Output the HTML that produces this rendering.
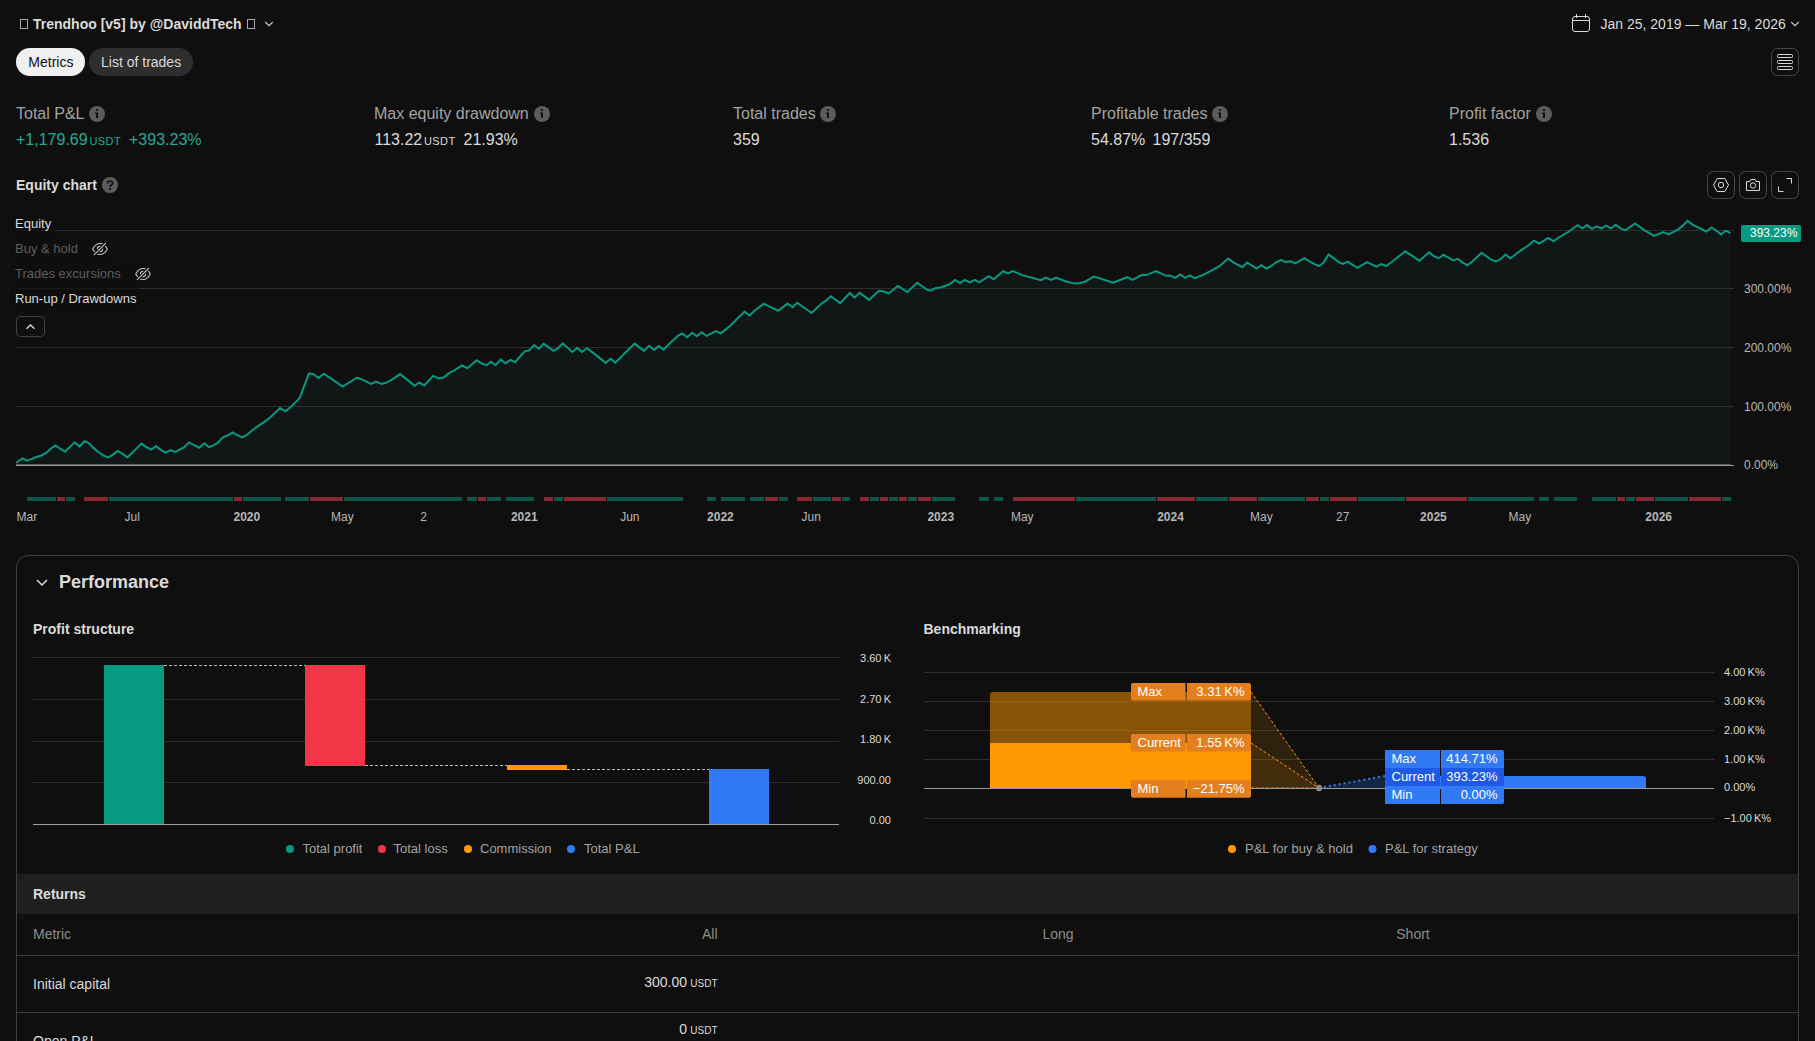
<!DOCTYPE html>
<html><head><meta charset="utf-8"><style>
html,body{margin:0;padding:0;background:#0f0f0f;}
body{width:1815px;height:1041px;overflow:hidden;position:relative;font-family:"Liberation Sans", sans-serif;}
.t{position:absolute;white-space:nowrap;font-family:"Liberation Sans", sans-serif;}
.box{position:absolute;box-sizing:border-box;border:1px solid #a8a8a8;}
.pill{position:absolute;border-radius:14px;}
svg{overflow:visible}
</style></head><body>
<div class="box" style="left:20px;top:19px;width:8px;height:10px;"></div><div class="t" style="left:33px;top:17px;font-size:14px;line-height:14px;color:#dbdbdb;font-weight:700;">Trendhoo [v5] by @DaviddTech</div>
<div class="box" style="left:247px;top:19px;width:8px;height:10px;"></div><svg style="position:absolute;left:264px;top:20px" width="10" height="8" viewBox="0 0 10 8"><path d="M1.2 2 L5 5.6 L8.8 2" fill="none" stroke="#c8c8c8" stroke-width="1.2"/></svg><svg style="position:absolute;left:1571px;top:13px" width="20" height="20" viewBox="0 0 20 20">
<rect x="1.5" y="3.5" width="17" height="15" rx="2.5" fill="none" stroke="#dbdbdb" stroke-width="1"/>
<line x1="1.5" y1="7.5" x2="18.5" y2="7.5" stroke="#dbdbdb" stroke-width="1"/>
<line x1="5.5" y1="1" x2="5.5" y2="5" stroke="#dbdbdb" stroke-width="1"/>
<line x1="14.5" y1="1" x2="14.5" y2="5" stroke="#dbdbdb" stroke-width="1"/>
</svg><div class="t" style="left:1600.5px;top:17px;font-size:14px;line-height:14px;color:#dbdbdb;font-weight:400;">Jan 25, 2019 — Mar 19, 2026</div>
<svg style="position:absolute;left:1790px;top:20px" width="10" height="8" viewBox="0 0 10 8"><path d="M1.2 2 L5 5.6 L8.8 2" fill="none" stroke="#c8c8c8" stroke-width="1.2"/></svg><div class="pill" style="left:16px;top:48px;width:69px;height:28px;background:#f0f0f0;"></div><div class="t" style="left:28.3px;top:55px;font-size:14px;line-height:14px;color:#0f0f0f;font-weight:400;">Metrics</div>
<div class="pill" style="left:89px;top:48px;width:104px;height:28px;background:#2e2e2e;"></div><div class="t" style="left:101px;top:55px;font-size:14px;line-height:14px;color:#dbdbdb;font-weight:400;">List of trades</div>
<svg style="position:absolute;left:1771px;top:48px" width="28" height="28" viewBox="0 0 28 28">
<rect x="0.5" y="0.5" width="27" height="27" rx="6" fill="none" stroke="#474747"/>
<rect x="6.5" y="6.5" width="15" height="3" rx="1" fill="none" stroke="#dbdbdb"/>
<rect x="6.5" y="12.5" width="15" height="3" rx="1" fill="none" stroke="#dbdbdb"/>
<rect x="6.5" y="18.5" width="15" height="3" rx="1" fill="none" stroke="#dbdbdb"/>
</svg><div class="t" style="left:16px;top:106px;font-size:16px;line-height:16px;color:#a3a3a3;font-weight:400;">Total P&amp;L</div>
<div class="t" style="left:374px;top:106px;font-size:16px;line-height:16px;color:#a3a3a3;font-weight:400;">Max equity drawdown</div>
<div class="t" style="left:733px;top:106px;font-size:16px;line-height:16px;color:#a3a3a3;font-weight:400;">Total trades</div>
<div class="t" style="left:1091px;top:106px;font-size:16px;line-height:16px;color:#a3a3a3;font-weight:400;">Profitable trades</div>
<div class="t" style="left:1449px;top:106px;font-size:16px;line-height:16px;color:#a3a3a3;font-weight:400;">Profit factor</div>
<svg style="position:absolute;left:89px;top:106px" width="16" height="16" viewBox="0 0 16 16"><circle cx="8" cy="8" r="8" fill="#5c5c5c"/><rect x="7" y="3.2" width="2" height="1.8" fill="#0f0f0f"/><path d="M6 6.4 H9 V12 H7 V7.8 H6 Z" fill="#0f0f0f"/></svg><svg style="position:absolute;left:534px;top:106px" width="16" height="16" viewBox="0 0 16 16"><circle cx="8" cy="8" r="8" fill="#5c5c5c"/><rect x="7" y="3.2" width="2" height="1.8" fill="#0f0f0f"/><path d="M6 6.4 H9 V12 H7 V7.8 H6 Z" fill="#0f0f0f"/></svg><svg style="position:absolute;left:820px;top:106px" width="16" height="16" viewBox="0 0 16 16"><circle cx="8" cy="8" r="8" fill="#5c5c5c"/><rect x="7" y="3.2" width="2" height="1.8" fill="#0f0f0f"/><path d="M6 6.4 H9 V12 H7 V7.8 H6 Z" fill="#0f0f0f"/></svg><svg style="position:absolute;left:1212px;top:106px" width="16" height="16" viewBox="0 0 16 16"><circle cx="8" cy="8" r="8" fill="#5c5c5c"/><rect x="7" y="3.2" width="2" height="1.8" fill="#0f0f0f"/><path d="M6 6.4 H9 V12 H7 V7.8 H6 Z" fill="#0f0f0f"/></svg><svg style="position:absolute;left:1536px;top:106px" width="16" height="16" viewBox="0 0 16 16"><circle cx="8" cy="8" r="8" fill="#5c5c5c"/><rect x="7" y="3.2" width="2" height="1.8" fill="#0f0f0f"/><path d="M6 6.4 H9 V12 H7 V7.8 H6 Z" fill="#0f0f0f"/></svg><div class="t" style="left:16px;top:132px;font-size:16px;line-height:16px;color:#22ab94;font-weight:400;">+1,179.69</div>
<div class="t" style="left:89.5px;top:136px;font-size:11px;line-height:11px;color:#22ab94;font-weight:400;letter-spacing:0.4px">USDT</div>
<div class="t" style="left:129px;top:132px;font-size:16px;line-height:16px;color:#22ab94;font-weight:400;">+393.23%</div>
<div class="t" style="left:374.5px;top:132px;font-size:16px;line-height:16px;color:#dbdbdb;font-weight:400;">113.22</div>
<div class="t" style="left:424px;top:136px;font-size:11px;line-height:11px;color:#dbdbdb;font-weight:400;letter-spacing:0.4px">USDT</div>
<div class="t" style="left:463.5px;top:132px;font-size:16px;line-height:16px;color:#dbdbdb;font-weight:400;">21.93%</div>
<div class="t" style="left:733px;top:132px;font-size:16px;line-height:16px;color:#dbdbdb;font-weight:400;">359</div>
<div class="t" style="left:1091px;top:132px;font-size:16px;line-height:16px;color:#dbdbdb;font-weight:400;">54.87%</div>
<div class="t" style="left:1152.5px;top:132px;font-size:16px;line-height:16px;color:#dbdbdb;font-weight:400;">197/359</div>
<div class="t" style="left:1449px;top:132px;font-size:16px;line-height:16px;color:#dbdbdb;font-weight:400;">1.536</div>
<div class="t" style="left:16px;top:178px;font-size:14px;line-height:14px;color:#dbdbdb;font-weight:700;">Equity chart</div>
<svg style="position:absolute;left:102px;top:177px" width="16" height="16" viewBox="0 0 16 16">
<circle cx="8" cy="8" r="8" fill="#5c5c5c"/>
<path d="M5.4 6.4 C5.4 4.9 6.5 4 8 4 C9.5 4 10.6 4.9 10.6 6.2 C10.6 7.8 8 8.1 8 9.9" fill="none" stroke="#0f0f0f" stroke-width="1.7"/>
<rect x="7.05" y="11.1" width="1.9" height="1.9" fill="#0f0f0f"/>
</svg><svg style="position:absolute;left:1707px;top:171px" width="28" height="28" viewBox="0 0 28 28"><rect x="0.5" y="0.5" width="27" height="27" rx="6" fill="none" stroke="#474747"/><path d="M10.2 7.5 H17.8 L21.5 14 L17.8 20.5 H10.2 L6.5 14 Z" fill="none" stroke="#dbdbdb"/><circle cx="14" cy="14" r="2.7" fill="none" stroke="#dbdbdb"/></svg><svg style="position:absolute;left:1739px;top:171px" width="28" height="28" viewBox="0 0 28 28"><rect x="0.5" y="0.5" width="27" height="27" rx="6" fill="none" stroke="#474747"/><path d="M7.5 10.5 H11 L12 8.5 H16 L17 10.5 H20.5 V19.5 H7.5 Z" fill="none" stroke="#dbdbdb" stroke-linejoin="round"/><circle cx="14" cy="14.5" r="2.7" fill="none" stroke="#dbdbdb"/></svg><svg style="position:absolute;left:1771px;top:171px" width="28" height="28" viewBox="0 0 28 28"><rect x="0.5" y="0.5" width="27" height="27" rx="6" fill="none" stroke="#474747"/><path d="M15.5 7.5 H20.5 V12.5" fill="none" stroke="#dbdbdb"/><path d="M7.5 15.5 V20.5 H12.5" fill="none" stroke="#dbdbdb"/></svg><svg style="position:absolute;left:0;top:0" width="1815" height="1041" viewBox="0 0 1815 1041" font-family="&quot;Liberation Sans&quot;, sans-serif">
<polygon points="16,465 16.5,463 17.6,461.7 22.4,458.5 27.2,460.6 32,458.9 36.9,456.8 41,455.7 46.5,452.6 51.3,448.2 55.5,445.4 60.3,448.8 65.1,451.6 69.9,447.1 74.7,442.4 79.6,446.5 84.4,441.3 89.2,443.3 94,448.4 98.8,452.3 103.7,455.7 108.1,457.4 112.6,454.8 117.7,450.9 122.3,453.7 127.4,457.4 131.9,453 136.7,448.4 141.5,443.6 146.4,447.1 151.2,449.5 156,446.1 160.8,449.8 165.6,452.6 170.5,450.2 175.3,452 180.1,449.3 184.2,447.1 189.1,442.4 194.6,445.4 199.4,447.7 204.2,443.3 209,447.1 213.9,445.1 218,442.6 222.8,437.4 227.6,435.5 232.5,432.3 237.3,435.1 242.1,437.4 246.9,434.8 252.4,430.2 256.9,426.9 265.8,420.9 272,415.8 280,407.9 285.5,411.3 291.3,406.5 299.6,398.2 309,373.4 313.4,374.1 318.6,378 323.7,373.7 332.6,379.6 342.6,386.5 357.2,377.5 362.3,379.6 371.2,384 376,381.7 381.5,384 385.7,382.8 391.9,379.6 400.1,374.1 407,379.6 414.6,385.8 419.1,382.4 424.2,385.4 433.2,375.9 438.7,378.3 443.5,377.5 449,373.1 453.9,370.7 462.1,365.4 467.4,368.2 476.6,360.3 482.1,363.5 486.6,365.2 491,361.7 495.5,365.1 500.7,359.6 505.4,363.3 510.4,359.9 515.1,362.2 524.4,351.6 529.3,350.2 534.1,345 538.9,348.9 543.7,343.6 553.4,350.9 557.5,348.6 562.7,343.4 572.4,351.9 577.1,347.9 582,351.9 587.1,348.2 596.1,355.1 605.7,362.9 610.5,358.8 615.3,362.6 634.6,343.6 644,350.9 649.1,345.8 653.9,350 658.7,346.1 663.6,349.6 669.1,344 678,335.8 682.1,333.4 687.2,337.2 692.2,332.8 696.9,336.2 701.4,332.3 706.5,335.8 715.9,331 720.7,333.4 725.5,329.6 730.4,325.5 744.5,311.6 749.6,315.5 754.8,310.5 763.7,303.6 778.2,310.9 787.6,303.6 792.7,307.2 797.2,302.7 811.5,313 821.6,303.6 826.4,300.3 830.8,296.2 840.2,303.1 849.8,293 854.7,297.6 859.5,292.6 869.1,299.9 878.8,290.7 883.2,291.2 888.7,293.4 897.8,285.9 907.4,292.1 917.1,282.7 927,289.6 931.1,290.7 935.9,287.9 940.7,287.5 949.7,284.1 955.2,280 960,283 964.8,280 969.7,282.4 974.8,279.9 979.4,282.3 988.6,276.2 993.7,279.2 1003.1,271.2 1007.9,273.4 1012.7,271 1022.3,275.1 1040.9,280.2 1045.8,277.6 1051.3,279.9 1056.1,277.6 1066,281.5 1074.7,283.6 1080,283 1085,281.7 1094,276.5 1113.3,282.7 1127,277.2 1132.5,279.9 1141.9,274.8 1146.3,275.1 1156,271 1160.8,273.4 1166.3,275.8 1170.4,275.8 1175.2,277.9 1180.1,274.4 1185.2,277.9 1189.7,275.4 1194.8,278.1 1204.2,274.4 1210,271.3 1219,266.5 1228.2,258.5 1233.4,262.3 1242.4,267.2 1247.2,262.6 1256.6,268.5 1261.4,265.1 1266.5,268.5 1270.6,266.5 1276.1,262.3 1280.9,259.9 1285.8,262.1 1290.6,261.2 1295.4,263.4 1304.4,258.2 1310.6,262.1 1318.8,266.2 1323.6,262.6 1328.5,254.4 1338.8,262.1 1342.9,264 1347.7,261.7 1357.4,267.9 1367,262.1 1376.4,266.7 1381.5,264 1386.3,266.2 1405.3,251.3 1419.4,260.7 1429,252.4 1433.8,256.1 1438.7,258.2 1443.5,254.8 1453.2,260.4 1457.7,258.8 1462.8,262.6 1467.3,265.2 1472.4,261.5 1481.6,252.7 1490.7,259.4 1496,261.5 1500.8,258.8 1505.6,254.6 1510.4,258.3 1520.3,250.8 1528.3,245.5 1533.9,240.7 1539.2,243.5 1548.3,238 1553.5,241.2 1558.6,237.5 1568.2,232 1577.5,225.2 1582.3,228.4 1587.1,225.1 1591.9,228.8 1596.7,226.4 1601.5,228.4 1606.3,225.6 1611,228.4 1615.8,224.8 1620.6,228.4 1625.4,230.4 1635,223.5 1644.6,230.4 1654.2,235.9 1663.3,232 1668.6,234.4 1677.7,229.6 1682.5,225.9 1687.6,220.8 1692.9,224.8 1701.6,229.1 1706.4,231.5 1711.5,227.5 1716.5,230.7 1721.1,234.4 1725.6,230.7 1730.4,233.2 1731,233 1731,465" fill="#111716"/>
<line x1="16" y1="230.5" x2="1734" y2="230.5" stroke="#2e2e2e" stroke-width="1"/>
<line x1="16" y1="288.5" x2="1734" y2="288.5" stroke="#2e2e2e" stroke-width="1"/>
<line x1="16" y1="347.5" x2="1734" y2="347.5" stroke="#2e2e2e" stroke-width="1"/>
<line x1="16" y1="406.5" x2="1734" y2="406.5" stroke="#2e2e2e" stroke-width="1"/>
<polyline points="16.5,463 17.6,461.7 22.4,458.5 27.2,460.6 32,458.9 36.9,456.8 41,455.7 46.5,452.6 51.3,448.2 55.5,445.4 60.3,448.8 65.1,451.6 69.9,447.1 74.7,442.4 79.6,446.5 84.4,441.3 89.2,443.3 94,448.4 98.8,452.3 103.7,455.7 108.1,457.4 112.6,454.8 117.7,450.9 122.3,453.7 127.4,457.4 131.9,453 136.7,448.4 141.5,443.6 146.4,447.1 151.2,449.5 156,446.1 160.8,449.8 165.6,452.6 170.5,450.2 175.3,452 180.1,449.3 184.2,447.1 189.1,442.4 194.6,445.4 199.4,447.7 204.2,443.3 209,447.1 213.9,445.1 218,442.6 222.8,437.4 227.6,435.5 232.5,432.3 237.3,435.1 242.1,437.4 246.9,434.8 252.4,430.2 256.9,426.9 265.8,420.9 272,415.8 280,407.9 285.5,411.3 291.3,406.5 299.6,398.2 309,373.4 313.4,374.1 318.6,378 323.7,373.7 332.6,379.6 342.6,386.5 357.2,377.5 362.3,379.6 371.2,384 376,381.7 381.5,384 385.7,382.8 391.9,379.6 400.1,374.1 407,379.6 414.6,385.8 419.1,382.4 424.2,385.4 433.2,375.9 438.7,378.3 443.5,377.5 449,373.1 453.9,370.7 462.1,365.4 467.4,368.2 476.6,360.3 482.1,363.5 486.6,365.2 491,361.7 495.5,365.1 500.7,359.6 505.4,363.3 510.4,359.9 515.1,362.2 524.4,351.6 529.3,350.2 534.1,345 538.9,348.9 543.7,343.6 553.4,350.9 557.5,348.6 562.7,343.4 572.4,351.9 577.1,347.9 582,351.9 587.1,348.2 596.1,355.1 605.7,362.9 610.5,358.8 615.3,362.6 634.6,343.6 644,350.9 649.1,345.8 653.9,350 658.7,346.1 663.6,349.6 669.1,344 678,335.8 682.1,333.4 687.2,337.2 692.2,332.8 696.9,336.2 701.4,332.3 706.5,335.8 715.9,331 720.7,333.4 725.5,329.6 730.4,325.5 744.5,311.6 749.6,315.5 754.8,310.5 763.7,303.6 778.2,310.9 787.6,303.6 792.7,307.2 797.2,302.7 811.5,313 821.6,303.6 826.4,300.3 830.8,296.2 840.2,303.1 849.8,293 854.7,297.6 859.5,292.6 869.1,299.9 878.8,290.7 883.2,291.2 888.7,293.4 897.8,285.9 907.4,292.1 917.1,282.7 927,289.6 931.1,290.7 935.9,287.9 940.7,287.5 949.7,284.1 955.2,280 960,283 964.8,280 969.7,282.4 974.8,279.9 979.4,282.3 988.6,276.2 993.7,279.2 1003.1,271.2 1007.9,273.4 1012.7,271 1022.3,275.1 1040.9,280.2 1045.8,277.6 1051.3,279.9 1056.1,277.6 1066,281.5 1074.7,283.6 1080,283 1085,281.7 1094,276.5 1113.3,282.7 1127,277.2 1132.5,279.9 1141.9,274.8 1146.3,275.1 1156,271 1160.8,273.4 1166.3,275.8 1170.4,275.8 1175.2,277.9 1180.1,274.4 1185.2,277.9 1189.7,275.4 1194.8,278.1 1204.2,274.4 1210,271.3 1219,266.5 1228.2,258.5 1233.4,262.3 1242.4,267.2 1247.2,262.6 1256.6,268.5 1261.4,265.1 1266.5,268.5 1270.6,266.5 1276.1,262.3 1280.9,259.9 1285.8,262.1 1290.6,261.2 1295.4,263.4 1304.4,258.2 1310.6,262.1 1318.8,266.2 1323.6,262.6 1328.5,254.4 1338.8,262.1 1342.9,264 1347.7,261.7 1357.4,267.9 1367,262.1 1376.4,266.7 1381.5,264 1386.3,266.2 1405.3,251.3 1419.4,260.7 1429,252.4 1433.8,256.1 1438.7,258.2 1443.5,254.8 1453.2,260.4 1457.7,258.8 1462.8,262.6 1467.3,265.2 1472.4,261.5 1481.6,252.7 1490.7,259.4 1496,261.5 1500.8,258.8 1505.6,254.6 1510.4,258.3 1520.3,250.8 1528.3,245.5 1533.9,240.7 1539.2,243.5 1548.3,238 1553.5,241.2 1558.6,237.5 1568.2,232 1577.5,225.2 1582.3,228.4 1587.1,225.1 1591.9,228.8 1596.7,226.4 1601.5,228.4 1606.3,225.6 1611,228.4 1615.8,224.8 1620.6,228.4 1625.4,230.4 1635,223.5 1644.6,230.4 1654.2,235.9 1663.3,232 1668.6,234.4 1677.7,229.6 1682.5,225.9 1687.6,220.8 1692.9,224.8 1701.6,229.1 1706.4,231.5 1711.5,227.5 1716.5,230.7 1721.1,234.4 1725.6,230.7 1730.4,233.2" fill="none" stroke="#089981" stroke-width="2" stroke-linejoin="miter"/>
<line x1="16" y1="465.5" x2="1734" y2="465.5" stroke="#999999" stroke-width="1"/>
<line x1="16" y1="464.5" x2="1731" y2="464.5" stroke="#5a5a5a" stroke-width="1"/>
<rect x="27" y="497" width="29" height="4" fill="#0d5549"/>
<rect x="57" y="497" width="8" height="4" fill="#862830"/>
<rect x="66" y="497" width="9" height="4" fill="#0d5549"/>
<rect x="84" y="497" width="24" height="4" fill="#862830"/>
<rect x="109" y="497" width="124" height="4" fill="#0d5549"/>
<rect x="234" y="497" width="8" height="4" fill="#862830"/>
<rect x="243" y="497" width="38" height="4" fill="#0d5549"/>
<rect x="285" y="497" width="24" height="4" fill="#0d5549"/>
<rect x="310" y="497" width="33" height="4" fill="#862830"/>
<rect x="344" y="497" width="118" height="4" fill="#0d5549"/>
<rect x="467" y="497" width="10" height="4" fill="#0d5549"/>
<rect x="478" y="497" width="8" height="4" fill="#862830"/>
<rect x="487" y="497" width="14" height="4" fill="#0d5549"/>
<rect x="506" y="497" width="28" height="4" fill="#0d5549"/>
<rect x="544" y="497" width="9" height="4" fill="#862830"/>
<rect x="554" y="497" width="9" height="4" fill="#0d5549"/>
<rect x="564" y="497" width="42" height="4" fill="#862830"/>
<rect x="607" y="497" width="76" height="4" fill="#0d5549"/>
<rect x="707" y="497" width="9" height="4" fill="#0d5549"/>
<rect x="721" y="497" width="24" height="4" fill="#0d5549"/>
<rect x="750" y="497" width="14" height="4" fill="#0d5549"/>
<rect x="765" y="497" width="13" height="4" fill="#862830"/>
<rect x="779" y="497" width="9" height="4" fill="#0d5549"/>
<rect x="797" y="497" width="15" height="4" fill="#862830"/>
<rect x="813" y="497" width="18" height="4" fill="#0d5549"/>
<rect x="832" y="497" width="9" height="4" fill="#862830"/>
<rect x="842" y="497" width="8" height="4" fill="#0d5549"/>
<rect x="860" y="497" width="9" height="4" fill="#862830"/>
<rect x="870" y="497" width="9" height="4" fill="#0d5549"/>
<rect x="880" y="497" width="8" height="4" fill="#862830"/>
<rect x="889" y="497" width="9" height="4" fill="#0d5549"/>
<rect x="899" y="497" width="8" height="4" fill="#862830"/>
<rect x="908" y="497" width="9" height="4" fill="#0d5549"/>
<rect x="918" y="497" width="13" height="4" fill="#862830"/>
<rect x="932" y="497" width="23" height="4" fill="#0d5549"/>
<rect x="979" y="497" width="10" height="4" fill="#0d5549"/>
<rect x="994" y="497" width="9" height="4" fill="#0d5549"/>
<rect x="1013" y="497" width="62" height="4" fill="#862830"/>
<rect x="1076" y="497" width="80" height="4" fill="#0d5549"/>
<rect x="1157" y="497" width="38" height="4" fill="#862830"/>
<rect x="1196" y="497" width="32" height="4" fill="#0d5549"/>
<rect x="1229" y="497" width="28" height="4" fill="#862830"/>
<rect x="1258" y="497" width="47" height="4" fill="#0d5549"/>
<rect x="1306" y="497" width="13" height="4" fill="#862830"/>
<rect x="1320" y="497" width="9" height="4" fill="#0d5549"/>
<rect x="1330" y="497" width="27" height="4" fill="#862830"/>
<rect x="1358" y="497" width="47" height="4" fill="#0d5549"/>
<rect x="1406" y="497" width="61" height="4" fill="#862830"/>
<rect x="1468" y="497" width="66" height="4" fill="#0d5549"/>
<rect x="1539" y="497" width="10" height="4" fill="#0d5549"/>
<rect x="1554" y="497" width="23" height="4" fill="#0d5549"/>
<rect x="1592" y="497" width="24" height="4" fill="#0d5549"/>
<rect x="1617" y="497" width="8" height="4" fill="#862830"/>
<rect x="1626" y="497" width="9" height="4" fill="#0d5549"/>
<rect x="1636" y="497" width="18" height="4" fill="#862830"/>
<rect x="1655" y="497" width="33" height="4" fill="#0d5549"/>
<rect x="1689" y="497" width="32" height="4" fill="#862830"/>
<rect x="1722" y="497" width="9" height="4" fill="#0d5549"/>
<text x="16.5" y="521" font-size="12" fill="#b8b8b8" font-weight="400" text-anchor="start" >Mar</text>
<text x="124.5" y="521" font-size="12" fill="#b8b8b8" font-weight="400" text-anchor="start" >Jul</text>
<text x="233.5" y="521" font-size="12" fill="#b8b8b8" font-weight="700" text-anchor="start" >2020</text>
<text x="331.1" y="521" font-size="12" fill="#b8b8b8" font-weight="400" text-anchor="start" >May</text>
<text x="420.3" y="521" font-size="12" fill="#b8b8b8" font-weight="400" text-anchor="start" >2</text>
<text x="510.9" y="521" font-size="12" fill="#b8b8b8" font-weight="700" text-anchor="start" >2021</text>
<text x="620.2" y="521" font-size="12" fill="#b8b8b8" font-weight="400" text-anchor="start" >Jun</text>
<text x="707.1" y="521" font-size="12" fill="#b8b8b8" font-weight="700" text-anchor="start" >2022</text>
<text x="801.6" y="521" font-size="12" fill="#b8b8b8" font-weight="400" text-anchor="start" >Jun</text>
<text x="927.4" y="521" font-size="12" fill="#b8b8b8" font-weight="700" text-anchor="start" >2023</text>
<text x="1010.9" y="521" font-size="12" fill="#b8b8b8" font-weight="400" text-anchor="start" >May</text>
<text x="1157.2" y="521" font-size="12" fill="#b8b8b8" font-weight="700" text-anchor="start" >2024</text>
<text x="1250.1" y="521" font-size="12" fill="#b8b8b8" font-weight="400" text-anchor="start" >May</text>
<text x="1336.0" y="521" font-size="12" fill="#b8b8b8" font-weight="400" text-anchor="start" >27</text>
<text x="1420.1" y="521" font-size="12" fill="#b8b8b8" font-weight="700" text-anchor="start" >2025</text>
<text x="1508.5" y="521" font-size="12" fill="#b8b8b8" font-weight="400" text-anchor="start" >May</text>
<text x="1645.3" y="521" font-size="12" fill="#b8b8b8" font-weight="700" text-anchor="start" >2026</text>
<text x="1744" y="292.8" font-size="12" fill="#b8b8b8" font-weight="400" text-anchor="start" >300.00%</text>
<text x="1744" y="351.8" font-size="12" fill="#b8b8b8" font-weight="400" text-anchor="start" >200.00%</text>
<text x="1744" y="410.8" font-size="12" fill="#b8b8b8" font-weight="400" text-anchor="start" >100.00%</text>
<text x="1744" y="469.3" font-size="12" fill="#b8b8b8" font-weight="400" text-anchor="start" >0.00%</text>
<rect x="1741" y="225" width="60" height="17" rx="2" fill="#089981"/>
<text x="1750" y="237" font-size="12" fill="#ffffff" font-weight="400" text-anchor="start" >393.23%</text>
</svg>
<div style="position:absolute;left:11px;top:211px;width:44px;height:24px;background:rgba(15,15,15,0.75)"></div>
<div class="t" style="left:15px;top:217.00px;font-size:13px;line-height:13px;color:#dbdbdb">Equity</div>
<div style="position:absolute;left:11px;top:236px;width:102px;height:24px;background:rgba(15,15,15,0.75)"></div>
<div class="t" style="left:15px;top:242.00px;font-size:13px;line-height:13px;color:#5d5d5d">Buy &amp; hold</div>
<div style="position:absolute;left:11px;top:261px;width:143px;height:24px;background:rgba(15,15,15,0.75)"></div>
<div class="t" style="left:15px;top:267.00px;font-size:13px;line-height:13px;color:#5d5d5d">Trades excursions</div>
<div style="position:absolute;left:11px;top:286px;width:128px;height:24px;background:rgba(15,15,15,0.75)"></div>
<div class="t" style="left:15px;top:292.00px;font-size:13px;line-height:13px;color:#dbdbdb">Run-up / Drawdowns</div>
<svg style="position:absolute;left:92px;top:242px" width="16" height="14" viewBox="0 0 16 14"><path d="M0.7 7 C2.6 3.4 5.2 1.5 8 1.5 C10.8 1.5 13.4 3.4 15.3 7 C13.4 10.6 10.8 12.5 8 12.5 C5.2 12.5 2.6 10.6 0.7 7 Z" fill="none" stroke="#c8c8c8" stroke-width="1.1"/><circle cx="8" cy="7" r="2.6" fill="none" stroke="#c8c8c8" stroke-width="1.1"/><line x1="2.3" y1="12.6" x2="13.6" y2="1.3" stroke="#0f0f0f" stroke-width="3.2"/><line x1="2.3" y1="12.6" x2="13.6" y2="1.3" stroke="#c8c8c8" stroke-width="1.1" stroke-linecap="round"/></svg>
<svg style="position:absolute;left:135px;top:267px" width="16" height="14" viewBox="0 0 16 14"><path d="M0.7 7 C2.6 3.4 5.2 1.5 8 1.5 C10.8 1.5 13.4 3.4 15.3 7 C13.4 10.6 10.8 12.5 8 12.5 C5.2 12.5 2.6 10.6 0.7 7 Z" fill="none" stroke="#c8c8c8" stroke-width="1.1"/><circle cx="8" cy="7" r="2.6" fill="none" stroke="#c8c8c8" stroke-width="1.1"/><line x1="2.3" y1="12.6" x2="13.6" y2="1.3" stroke="#0f0f0f" stroke-width="3.2"/><line x1="2.3" y1="12.6" x2="13.6" y2="1.3" stroke="#c8c8c8" stroke-width="1.1" stroke-linecap="round"/></svg>
<svg style="position:absolute;left:16px;top:316px" width="29" height="21" viewBox="0 0 29 21"><rect x="0.5" y="0.5" width="28" height="20" rx="4" fill="none" stroke="#444"/><path d="M10.5 12.8 L14.5 9 L18.5 12.8" fill="none" stroke="#dbdbdb" stroke-width="1.3"/></svg><div style="position:absolute;left:16px;top:555px;width:1783px;height:600px;box-sizing:border-box;border:1px solid #404040;border-radius:12px;"></div>
<div style="position:absolute;left:17px;top:874px;width:1781px;height:40px;background:#1f1f1f"></div>
<svg style="position:absolute;left:0;top:0" width="1815" height="1041" viewBox="0 0 1815 1041" font-family="&quot;Liberation Sans&quot;, sans-serif">
<path d="M37 580 L42 585 L47 580" fill="none" stroke="#dbdbdb" stroke-width="1.5"/>
<text x="59" y="588.2" font-size="18" fill="#dbdbdb" font-weight="700" text-anchor="start" >Performance</text>
<text x="33" y="634.4" font-size="14" fill="#dbdbdb" font-weight="700" text-anchor="start" >Profit structure</text>
<text x="923.5" y="634.4" font-size="14" fill="#dbdbdb" font-weight="700" text-anchor="start" >Benchmarking</text>
<line x1="33" y1="657.5" x2="839" y2="657.5" stroke="#2e2e2e"/>
<text x="891" y="662" font-size="11" fill="#dbdbdb" font-weight="400" text-anchor="end" >3.60&#8201;K</text>
<line x1="33" y1="699.5" x2="839" y2="699.5" stroke="#2e2e2e"/>
<text x="891" y="703" font-size="11" fill="#dbdbdb" font-weight="400" text-anchor="end" >2.70&#8201;K</text>
<line x1="33" y1="741.5" x2="839" y2="741.5" stroke="#2e2e2e"/>
<text x="891" y="743" font-size="11" fill="#dbdbdb" font-weight="400" text-anchor="end" >1.80&#8201;K</text>
<line x1="33" y1="782.5" x2="839" y2="782.5" stroke="#2e2e2e"/>
<text x="891" y="784" font-size="11" fill="#dbdbdb" font-weight="400" text-anchor="end" >900.00</text>
<text x="891" y="824" font-size="11" fill="#dbdbdb" font-weight="400" text-anchor="end" >0.00</text>
<rect x="104" y="665" width="60" height="159" fill="#089981"/>
<rect x="305" y="665" width="60" height="101" fill="#f23645"/>
<rect x="507" y="765" width="60" height="5" fill="#ff9800"/>
<rect x="709" y="769" width="60" height="55" fill="#3179f5"/>
<line x1="164" y1="665.5" x2="305" y2="665.5" stroke="#b8b8b8" stroke-width="1" stroke-dasharray="3 2"/>
<line x1="365" y1="765.5" x2="507" y2="765.5" stroke="#b8b8b8" stroke-width="1" stroke-dasharray="3 2"/>
<line x1="567" y1="769.5" x2="709" y2="769.5" stroke="#b8b8b8" stroke-width="1" stroke-dasharray="3 2"/>
<line x1="33" y1="824.5" x2="839" y2="824.5" stroke="#a0a0a0" stroke-width="1"/>
<circle cx="290" cy="849" r="4" fill="#089981"/>
<text x="302.5" y="853" font-size="13" fill="#a3a3a3" font-weight="400" text-anchor="start" >Total profit</text>
<circle cx="382" cy="849" r="4" fill="#f23645"/>
<text x="393.5" y="853" font-size="13" fill="#a3a3a3" font-weight="400" text-anchor="start" >Total loss</text>
<circle cx="468" cy="849" r="4" fill="#ff9800"/>
<text x="480" y="853" font-size="13" fill="#a3a3a3" font-weight="400" text-anchor="start" >Commission</text>
<circle cx="571" cy="849" r="4" fill="#3179f5"/>
<text x="584" y="853" font-size="13" fill="#a3a3a3" font-weight="400" text-anchor="start" >Total P&amp;L</text>
<line x1="924" y1="672.5" x2="1714" y2="672.5" stroke="#2e2e2e"/>
<text x="1724" y="676" font-size="11" fill="#dbdbdb" font-weight="400" text-anchor="start" >4.00&#8201;K%</text>
<line x1="924" y1="701.5" x2="1714" y2="701.5" stroke="#2e2e2e"/>
<text x="1724" y="705" font-size="11" fill="#dbdbdb" font-weight="400" text-anchor="start" >3.00&#8201;K%</text>
<line x1="924" y1="730.5" x2="1714" y2="730.5" stroke="#2e2e2e"/>
<text x="1724" y="734" font-size="11" fill="#dbdbdb" font-weight="400" text-anchor="start" >2.00&#8201;K%</text>
<line x1="924" y1="759.5" x2="1714" y2="759.5" stroke="#2e2e2e"/>
<text x="1724" y="763" font-size="11" fill="#dbdbdb" font-weight="400" text-anchor="start" >1.00&#8201;K%</text>
<line x1="924" y1="818.5" x2="1714" y2="818.5" stroke="#2e2e2e"/>
<text x="1724" y="821.5" font-size="11" fill="#dbdbdb" font-weight="400" text-anchor="start" >−1.00&#8201;K%</text>
<text x="1724" y="791" font-size="11" fill="#dbdbdb" font-weight="400" text-anchor="start" >0.00%</text>
<path d="M990 788 V695 Q990 692 993 692 H1251 V788 Z" fill="rgba(255,152,0,0.5)"/>
<rect x="990" y="743" width="261" height="45" fill="#ff9800"/>
<polygon points="1251,692 1319,788 1251,788" fill="rgba(255,152,0,0.13)"/>
<polygon points="1251,743 1319,788 1251,788" fill="rgba(255,152,0,0.10)"/>
<line x1="1251" y1="692" x2="1319" y2="788" stroke="#ff9800" stroke-width="1" stroke-dasharray="3 2"/>
<line x1="1251" y1="743" x2="1319" y2="788" stroke="#ff9800" stroke-width="1" stroke-dasharray="3 2"/>
<line x1="1251" y1="788" x2="1319" y2="788" stroke="#ff9800" stroke-width="1" stroke-dasharray="3 2"/>
<line x1="924" y1="788.5" x2="1714" y2="788.5" stroke="#9a9a9a" stroke-width="1"/>
<polygon points="1319,788 1385,776 1385,788" fill="rgba(49,121,245,0.22)"/>
<line x1="1319" y1="788" x2="1385" y2="776" stroke="#3179f5" stroke-width="2" stroke-dasharray="2 3"/>
<path d="M1385 788 V776 H1643 Q1646 776 1646 779 V788 Z" fill="#3179f5"/>
<circle cx="1319" cy="788" r="3.2" fill="#8a8a8a"/>
<path d="M1133 683 H1185.5 V700.6 H1133 Q1131 700.6 1131 698.6 V685 Q1131 683 1133 683 Z" fill="#e47f1f"/><path d="M1187.0 683 H1249.0 Q1251.0 683 1251.0 685 V698.6 Q1251.0 700.6 1249.0 700.6 H1187.0 Z" fill="#e47f1f"/><text x="1137.5" y="695.5999999999999" font-size="13" fill="#ffffff" font-weight="400" text-anchor="start" >Max</text><text x="1244.5" y="695.5999999999999" font-size="13" fill="#ffffff" font-weight="400" text-anchor="end" >3.31&#8201;K%</text>
<path d="M1133 734 H1185.5 V751.6 H1133 Q1131 751.6 1131 749.6 V736 Q1131 734 1133 734 Z" fill="#e47f1f"/><path d="M1187.0 734 H1249.0 Q1251.0 734 1251.0 736 V749.6 Q1251.0 751.6 1249.0 751.6 H1187.0 Z" fill="#e47f1f"/><text x="1137.5" y="746.5999999999999" font-size="13" fill="#ffffff" font-weight="400" text-anchor="start" >Current</text><text x="1244.5" y="746.5999999999999" font-size="13" fill="#ffffff" font-weight="400" text-anchor="end" >1.55&#8201;K%</text>
<path d="M1133 780.2 H1185.5 V797.8000000000001 H1133 Q1131 797.8000000000001 1131 795.8000000000001 V782.2 Q1131 780.2 1133 780.2 Z" fill="#e47f1f"/><path d="M1187.0 780.2 H1249.0 Q1251.0 780.2 1251.0 782.2 V795.8000000000001 Q1251.0 797.8000000000001 1249.0 797.8000000000001 H1187.0 Z" fill="#e47f1f"/><text x="1137.5" y="792.8" font-size="13" fill="#ffffff" font-weight="400" text-anchor="start" >Min</text><text x="1244.5" y="792.8" font-size="13" fill="#ffffff" font-weight="400" text-anchor="end" >−21.75%</text>
<rect x="1385" y="750" width="55" height="18" fill="#3179f5"/><path d="M1441 750 H1502 Q1504 750 1504 752 V768 Q1504 768 1504 768 H1441 Z" fill="#3179f5"/><text x="1391.5" y="762.8" font-size="13" fill="#ffffff" font-weight="400" text-anchor="start" >Max</text><text x="1497.5" y="762.8" font-size="13" fill="#ffffff" font-weight="400" text-anchor="end" >414.71%</text>
<rect x="1385" y="768" width="55" height="18" fill="#1f5ae6"/><path d="M1441 768 H1504 Q1504 768 1504 768 V786 Q1504 786 1504 786 H1441 Z" fill="#1f5ae6"/><text x="1391.5" y="780.8" font-size="13" fill="#ffffff" font-weight="400" text-anchor="start" >Current</text><text x="1497.5" y="780.8" font-size="13" fill="#ffffff" font-weight="400" text-anchor="end" >393.23%</text>
<rect x="1385" y="786" width="55" height="18" fill="#3179f5"/><path d="M1441 786 H1504 Q1504 786 1504 786 V802 Q1504 804 1502 804 H1441 Z" fill="#3179f5"/><text x="1391.5" y="798.8" font-size="13" fill="#ffffff" font-weight="400" text-anchor="start" >Min</text><text x="1497.5" y="798.8" font-size="13" fill="#ffffff" font-weight="400" text-anchor="end" >0.00%</text>
<circle cx="1232" cy="849" r="4" fill="#ff9800"/>
<text x="1245" y="853" font-size="13" fill="#a3a3a3" font-weight="400" text-anchor="start" >P&amp;L for buy &amp; hold</text>
<circle cx="1372.5" cy="849" r="4" fill="#3179f5"/>
<text x="1385" y="853" font-size="13" fill="#a3a3a3" font-weight="400" text-anchor="start" >P&amp;L for strategy</text>
<text x="33" y="899" font-size="14" fill="#dbdbdb" font-weight="700" text-anchor="start" >Returns</text>
<text x="33" y="939" font-size="14" fill="#8c8c8c" font-weight="400" text-anchor="start" >Metric</text>
<text x="717.5" y="939" font-size="14" fill="#8c8c8c" font-weight="400" text-anchor="end" >All</text>
<text x="1058" y="939" font-size="14" fill="#8c8c8c" font-weight="400" text-anchor="middle" >Long</text>
<text x="1413" y="939" font-size="14" fill="#8c8c8c" font-weight="400" text-anchor="middle" >Short</text>
<line x1="17" y1="955.5" x2="1798" y2="955.5" stroke="#3a3a3a"/>
<text x="33" y="989" font-size="14" fill="#dbdbdb" font-weight="400" text-anchor="start" >Initial capital</text>
<text x="687" y="986.5" font-size="14" fill="#dbdbdb" font-weight="400" text-anchor="end" >300.00</text>
<text x="717.5" y="986.5" font-size="10" fill="#dbdbdb" font-weight="400" text-anchor="end" >USDT</text>
<line x1="17" y1="1012.5" x2="1798" y2="1012.5" stroke="#3a3a3a"/>
<text x="33" y="1046" font-size="14" fill="#dbdbdb" font-weight="400" text-anchor="start" >Open P&amp;L</text>
<text x="687" y="1034" font-size="14" fill="#dbdbdb" font-weight="400" text-anchor="end" >0</text>
<text x="717.5" y="1034" font-size="10" fill="#dbdbdb" font-weight="400" text-anchor="end" >USDT</text>
</svg>
</body></html>
